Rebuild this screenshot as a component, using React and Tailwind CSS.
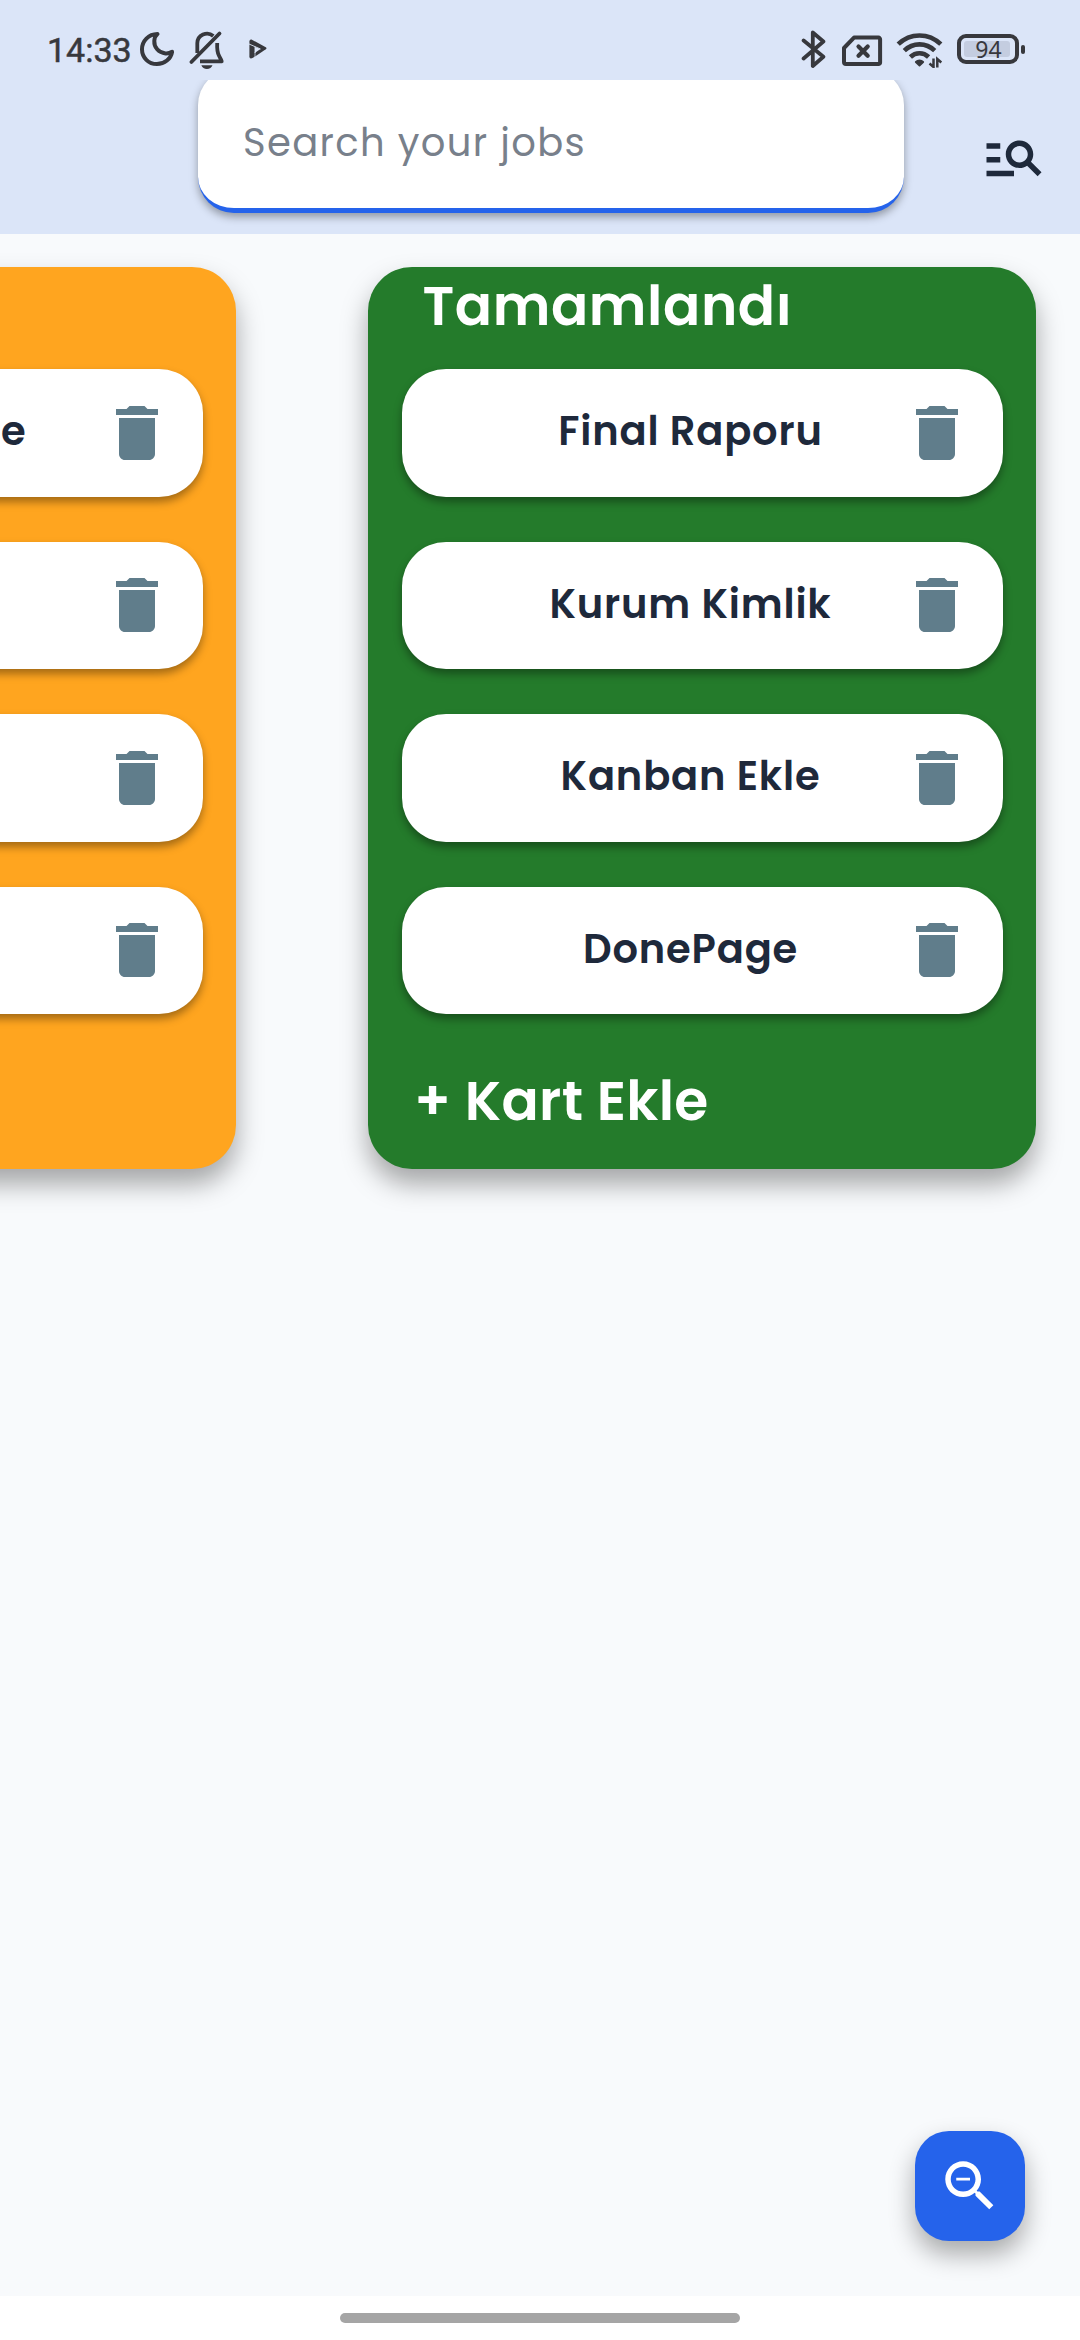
const doneJobs = ["Final Raporu", "Kurum Kimlik", "Kanban Ekle", "DonePage"];

function MoonIcon() {
  return (
    <svg className="ml-[7px] mt-[17px] h-[36px] w-[36px]" viewBox="0 0 36 36" fill="none" stroke="#37383d" strokeWidth="4" strokeLinejoin="round">
      <path d="M18.500 3C9.500 3.200 3 9.900 3 18.200c0 8.400 6.600 14.900 14.900 14.900 7.700 0 14-5.300 15.200-12.300-2 1.200-4.300 1.800-6.600 1.600-7-.5-11.500-6.200-11.200-12.600.1-2.800 1.200-5.200 3.200-6.800z" />
    </svg>
  );
}

function BellOffIcon() {
  return (
    <svg className="ml-[14px] mt-[15px] h-[40px] w-[36px] overflow-visible" viewBox="0 0 36 40" fill="none" stroke="#37383d" strokeWidth="3.800">
      <path d="M8.300 25V15.300a9.700 9.700 0 0 1 16-7.300" />
      <path d="M30.500 5.500 2.400 34" strokeLinecap="round" />
      <path d="M28.200 15c-.4 7 .5 10.500 2 13.200 1.100 1.900 2.100 3.100 2.500 5.200H11" strokeLinejoin="round" />
      <path d="M12.300 37.300h11.200c-.8 2.400-3 3.700-5.600 3.700s-4.800-1.300-5.600-3.700z" fill="#37383d" stroke="none" />
    </svg>
  );
}

function PlayIcon() {
  return (
    <svg className="ml-[24px] h-[20px] w-[18px]" viewBox="0 0 18 20">
      <path d="M2.500.500 16.800 8.300q1.400 1 0 2L4 18.800Q.4 20.500.4 17.500V2.200Q.6.100 2.500.500z" fill="#37383d" />
      <path d="M0 5 11.500 10M6 7.500v6.500" stroke="#dbe5f8" strokeWidth="0.900" fill="none" />
      <path d="M6 8v5.800l5.500-3.700z" fill="#dbe5f8" />
      <path d="M6 13v6" stroke="#dbe5f8" strokeWidth="0.700" />
    </svg>
  );
}

function BluetoothIcon() {
  return (
    <svg className="mt-[17px] h-[40px] w-[26px]" viewBox="0 0 26 40" fill="none" stroke="#37383d" strokeWidth="3.800" strokeLinecap="round" strokeLinejoin="round">
      <path d="M2.600 11.500 22.400 27.800 11.800 37V3.500l10.600 9L2.600 29.500" />
    </svg>
  );
}

function SimOffIcon() {
  return (
    <svg className="ml-[13.500px] mt-[21px] h-[32px] w-[42px]" viewBox="0 0 42 32" fill="none" stroke="#37383d" strokeWidth="4" strokeLinecap="round" strokeLinejoin="round">
      <path d="M13 2.600h24.500a1.600 1.600 0 0 1 1.600 1.600v23.300a1.600 1.600 0 0 1-1.600 1.600H5a2 2 0 0 1-2-2V13z" />
      <path d="m17.500 11.500 9.200 9.200M26.700 11.500l-9.200 9.200" strokeWidth="4.200" />
    </svg>
  );
}

function WifiIcon() {
  return (
    <svg className="ml-[13px] mt-[19px] h-[36px] w-[47px]" viewBox="0 0 47 36" fill="none" stroke="#37383d" strokeWidth="4.600">
      <path d="M2.200 12.200c12-11.700 30.600-11.700 42.600 0" />
      <path d="M8.300 18.600c8.600-8.300 21.800-8.300 30.400 0" />
      <path d="M14.400 25c5.200-5 13-5 18.200 0" />
      <path d="M23.500 33.600 19.800 30c2-2 5.400-2 7.400 0z" fill="#37383d" strokeWidth="1.800" strokeLinejoin="round" />
      <path d="M37.500 26.500v8.500l-4-3.500M41.300 35.500V27l4 3.500" strokeWidth="2.500" />
    </svg>
  );
}

function Battery({ level }) {
  return (
    <div className="ml-[14.500px] mt-[18px] flex items-center gap-[2px]">
      <div className="flex h-[30px] w-[62px] items-center rounded-[9px] border-4 border-[#37383d] pl-[3px]">
        <div className="flex h-4 w-[46px] items-center justify-center rounded-[3px] bg-[#c4cde0] pl-[3px] font-['Noto_Sans'] text-[23px] leading-none text-[#37383d]">
          {level}
        </div>
      </div>
      <div className="h-[9px] w-1 rounded-[2px] bg-[#37383d]" />
    </div>
  );
}

function TrashIcon() {
  return (
    <svg className="h-[72px] w-[72px] shrink-0" viewBox="0 0 24 24" fill="#607d8b">
      <path d="M6 19c0 1.100.9 2 2 2h8c1.100 0 2-.9 2-2V7H6v12zM19 4h-3.500l-1-1h-5l-1 1H5v2h14V4z" />
    </svg>
  );
}

function JobCard({ children, edge }) {
  return (
    <div className="flex h-[127.500px] items-center rounded-[44px] bg-white pl-[79px] pr-[30px] shadow-[0_5px_9px_rgba(0,0,0,0.36)]">
      <div
        className={
          edge
            ? "flex-1 whitespace-nowrap pb-[3.500px] pr-[74px] text-right text-[40px] font-semibold tracking-[0.830px]"
            : "flex-1 whitespace-nowrap pb-[3.500px] text-center text-[40px] font-semibold tracking-[0.830px]"
        }
      >
        {children}
      </div>
      <TrashIcon />
    </div>
  );
}

function StatusBar() {
  return (
    <div className="flex h-20 items-center justify-between pl-[47px] pr-[55px]">
      <div className="flex items-center">
        <span className="mt-[20px] font-['Roboto'] text-[34px] font-normal leading-none text-[#37383d] [-webkit-text-stroke:0.500px_#37383d]">14:33</span>
        <MoonIcon />
        <BellOffIcon />
        <div className="mt-[17px] flex"><PlayIcon /></div>
      </div>
      <div className="flex items-center">
        <BluetoothIcon />
        <SimOffIcon />
        <WifiIcon />
        <Battery level={94} />
      </div>
    </div>
  );
}

function SearchHeader() {
  return (
    <div className="flex h-[153.500px] items-start overflow-hidden pl-[198px] pr-[33px]">
      <div className="-mt-[11px] flex h-[144px] w-[706px] items-center rounded-[36px] border-b-[5.500px] border-[#2563eb] bg-white pl-[45px] pt-[8px] text-[38.500px] tracking-[1.375px] text-[#78808b] shadow-[0_4px_9px_rgba(0,0,0,0.34)]">
        Search your jobs
      </div>
      <svg className="ml-auto mt-[44px] h-[66px] w-[66px]" viewBox="0 0 24 24" fill="#1e293b">
        <path d="M7 9H2V7h5v2zm0 3H2v2h5v-2zm13.590 7l-3.830-3.830c-.8.520-1.740.830-2.760.830-2.760 0-5-2.240-5-5s2.240-5 5-5 5 2.240 5 5c0 1.020-.310 1.960-.830 2.750L22 17.590 20.590 19zM17 11c0-1.650-1.350-3-3-3s-3 1.350-3 3 1.350 3 3 3 3-1.350 3-3zM2 19h10v-2H2v2z" />
      </svg>
    </div>
  );
}

export default function App() {
  return (
    <div className="flex h-[2340px] w-[1080px] flex-col overflow-hidden bg-[#f8fafc] font-['Poppins','Inter',sans-serif] text-[#1e293b]">
      <header className="bg-[#dbe5f8]">
        <StatusBar />
        <SearchHeader />
      </header>

      <main className="flex flex-1 flex-col justify-between">
        <div className="flex justify-end gap-[132px] pr-11 pt-[33px]">
          <section className="h-[902px] w-[668px] shrink-0 rounded-[44px] bg-[#ffa51f] px-[33.500px] pt-[102.500px] shadow-[0_15px_27px_rgba(0,0,0,0.340)]">
            <div className="flex flex-col gap-[45px]">
              <JobCard edge>e</JobCard>
              <JobCard />
              <JobCard />
              <JobCard />
            </div>
          </section>

          <section className="h-[902px] w-[668px] shrink-0 rounded-[44px] bg-[#247b2b] px-[33.500px] shadow-[0_15px_27px_rgba(0,0,0,0.340)]">
            <h2 className="mb-6 pl-[21px] text-[55px] font-semibold leading-[78.500px] tracking-[0.600px] text-white">Tamamlandı</h2>
            <div className="flex flex-col gap-[45px]">
              {doneJobs.map((job) => (
                <JobCard key={job}>{job}</JobCard>
              ))}
            </div>
            <button className="mt-12 block pl-[12.500px] text-[55px] font-semibold leading-[78px] tracking-[0.300px] text-white">+ Kart Ekle</button>
          </section>
        </div>

        <button className="mb-[55px] mr-[55px] flex h-[110px] w-[110px] items-center justify-center self-end rounded-[34px] bg-[#2563eb] shadow-[0_13px_26px_rgba(0,0,0,0.330)]">
          <svg className="h-[66px] w-[66px]" viewBox="0 0 24 24" fill="#ffffff">
            <path d="M15.500 14h-.790l-.280-.270C15.410 12.590 16 11.110 16 9.500 16 5.910 13.090 3 9.500 3S3 5.910 3 9.500 5.910 16 9.500 16c1.610 0 3.090-.590 4.230-1.570l.270.280v.790l5 4.990L20.490 19l-4.990-5zm-6 0C7.010 14 5 11.990 5 9.500S7.010 5 9.500 5 14 7.010 14 9.500 11.990 14 9.500 14zM7 9h5v1H7z" />
          </svg>
        </button>
      </main>

      <footer className="flex h-[44px] justify-center bg-white pt-[17px]">
        <div className="h-[10px] w-[400px] rounded-full bg-[#a5a5a5]" />
      </footer>
    </div>
  );
}
